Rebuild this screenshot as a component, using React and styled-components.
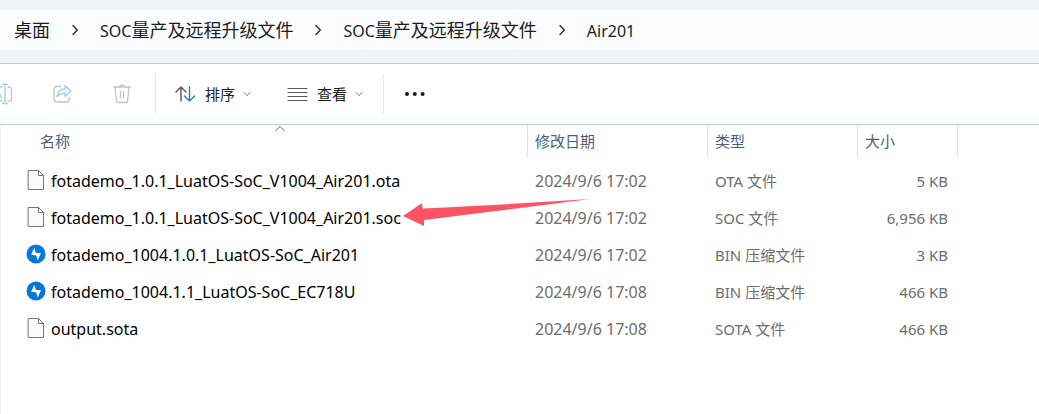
import React from "react";
import styled, { createGlobalStyle } from "styled-components";

const GlobalStyle = createGlobalStyle`
  * { box-sizing: border-box; }
  body {
    margin: 0;
    background: #fff;
    font-family: "Noto Sans", "Noto Sans CJK SC", sans-serif;
    font-size: 15px;
    line-height: 20px;
    color: #1b1b1b;
    overflow-x: hidden;
  }
  button { font: inherit; color: inherit; background: none; border: 0; padding: 0; margin: 0; }
`;

const Window = styled.div`
  display: flex;
  flex-direction: column;
  min-height: 100vh;
`;

const AddressBand = styled.header`
  padding: 10px 0 13px;
  background: #eff4f7;
  border-bottom: 1px solid #b8cbd1;
`;

const Breadcrumb = styled.nav`
  display: flex;
  align-items: center;
  gap: 20px;
  height: 40px;
  padding-left: 14px;
  background: #fbfcfe;
  white-space: nowrap;
`;

const Crumb = styled.a`
  color: #1b1b1b;
  text-decoration: none;
  font-size: 18px;
  line-height: 24px;
`;

const Latin = styled.span`
  font-size: 16px;
`;

const Toolbar = styled.div`
  display: flex;
  align-items: center;
  height: 61px;
  border-bottom: 1px solid #b8cbd1;
`;

const Icon = styled.svg`
  display: block;
  flex: none;
  fill: none;
  stroke: currentColor;
  stroke-linecap: round;
  stroke-linejoin: round;
`;

const IconGroup = styled.div`
  display: flex;
  align-items: center;
  gap: 40px;
  color: #c4c4c4;
`;

const ToolButton = styled.button`
  display: flex;
  align-items: center;
  gap: 8px;
  white-space: nowrap;
`;

const Separator = styled.span`
  width: 1px;
  height: 40px;
  margin: 0 ${(p) => p.$after}px 0 ${(p) => p.$before}px;
  background: #e8e8e8;
`;

const MenuGroup = styled.div`
  display: flex;
  gap: 36px;
`;

const FilePane = styled.main`
  flex: 1;
  border-left: 1px solid #f0f0f0;
`;

const FileTable = styled.table`
  width: 100%;
  table-layout: fixed;
  border-collapse: separate;
  border-spacing: 0;
`;

const HeadCell = styled.th`
  width: ${(p) => p.$width}px;
  height: 32px;
  padding: 0 0 0 ${(p) => p.$indent || 0}px;
  border-right: 1px solid #e2e2e2;
  text-align: left;
  font-weight: 400;
  color: #4c607a;
`;

const SortButton = styled.button`
  position: relative;
  display: block;
  width: 100%;
  height: 32px;
  padding-left: 7px;
  text-align: left;
`;

const SortMark = styled(Icon)`
  position: absolute;
  top: 0;
  left: calc(50% - 6px);
  color: #6a6a6a;
`;

const Rows = styled.tbody`
  &::before {
    content: "";
    display: block;
    height: 5px;
  }
`;

const Cell = styled.td`
  height: 37px;
  padding: 0 10px 0 7px;
  text-align: ${(p) => (p.$right ? "right" : "left")};
  font-size: ${(p) => (p.$large ? 16 : 15)}px;
  color: #6d6d6d;
  white-space: nowrap;
`;

const NameCell = styled(Cell)`
  position: relative;
  padding: 0 0 0 25px;
  color: #000;
`;

const FileName = styled.div`
  display: flex;
  align-items: center;
  gap: 5px;
`;

const Pointer = styled.svg`
  position: absolute;
  left: 401px;
  top: -1px;
  z-index: 1;
  fill: #ff5364;
`;

const files = [
  { name: "fotademo_1.0.1_LuatOS-SoC_V1004_Air201.ota", date: "2024/9/6 17:02", type: "OTA 文件", size: "5 KB" },
  { name: "fotademo_1.0.1_LuatOS-SoC_V1004_Air201.soc", date: "2024/9/6 17:02", type: "SOC 文件", size: "6,956 KB", marked: true },
  { name: "fotademo_1004.1.0.1_LuatOS-SoC_Air201", date: "2024/9/6 17:02", type: "BIN 压缩文件", size: "3 KB", archive: true },
  { name: "fotademo_1004.1.1_LuatOS-SoC_EC718U", date: "2024/9/6 17:08", type: "BIN 压缩文件", size: "466 KB", archive: true },
  { name: "output.sota", date: "2024/9/6 17:08", type: "SOTA 文件", size: "466 KB" },
];

const CrumbArrow = () => (
  <Icon width="10" height="12" viewBox="0 0 10 12" strokeWidth="1.5" color="#333" aria-hidden="true">
    <path d="M3 1.5 7.3 6 3 10.5" />
  </Icon>
);

const MenuArrow = () => (
  <Icon width="8" height="6" viewBox="0 0 8 6" color="#777" aria-hidden="true">
    <path d="M1 1.5 4 4.5 7 1.5" />
  </Icon>
);

const RenameIcon = () => (
  <Icon width="12" height="22" viewBox="0 0 12 22" strokeWidth="1.3">
    <path d="M0 4H2M0 18H2M8 4h1a2.5 2.5 0 0 1 2.5 2.5v9A2.5 2.5 0 0 1 9 18H8" />
    <path d="M5 1.5v19M2.5 1.5h5M2.5 20.5h5M-2 7 1.5 15" stroke="#9fcdf2" />
  </Icon>
);

const ShareIcon = () => (
  <Icon width="20" height="22" viewBox="0 0 20 22" strokeWidth="1.3">
    <path d="M8.500 3.500H5A3 3 0 0 0 2 6.500v9.500a3 3 0 0 0 3 3h9.500a3 3 0 0 0 3-3V14.500" />
    <path d="M13 2.500 19 8l-6 5.500v-3.200C9 10.200 7 11.300 5.200 13.800 5.500 9 8.500 6 13 5.700z" fill="#edf6fd" stroke="#9fcdf2" />
  </Icon>
);

const TrashIcon = () => (
  <Icon width="20" height="22" viewBox="0 0 20 22" strokeWidth="1.3">
    <path d="M1.500 4H18.500M7.500 4a2.500 2 0 0 1 5 0M3 4.500 4.400 17.800a2 2 0 0 0 2 1.700h7.200a2 2 0 0 0 2-1.700L17 4.500M8.500 8.500v6.500M11.500 8.500v6.500" />
  </Icon>
);

const SortIcon = () => (
  <Icon width="22" height="18" viewBox="0 0 22 18" strokeWidth="1.4">
    <path d="M6 16V2M1 7l5-5 5 5" stroke="#555" />
    <path d="M14.500 2v14M9.500 11l5 5 5-5" stroke="#1683d8" />
  </Icon>
);

const ViewIcon = () => (
  <Icon width="22" height="16" viewBox="0 0 22 16">
    <path d="M1 2.500h19M1 6.500h19M1 10.500h19M1 14.500h19" stroke="#5c5c5c" />
  </Icon>
);

const PageIcon = () => (
  <Icon width="20" height="22" viewBox="0 0 20 22" aria-hidden="true">
    <path d="M2.500 .5h10l5 5v14h-15z" fill="#fafafa" stroke="#777" strokeLinejoin="miter" />
    <path d="M12.500 .5v5h5" stroke="#777" strokeLinejoin="miter" />
  </Icon>
);

const ArchiveIcon = () => (
  <Icon width="20" height="22" viewBox="0 0 20 22" aria-hidden="true">
    <circle cx="10" cy="10" r="9.500" fill="#0878d8" stroke="none" />
    <path d="M8.300 3.800 9.800 8.800 15 9.200 11.600 16.400 10.300 11.400 5.200 10.700z" fill="#fff" stroke="none" />
  </Icon>
);

const path = ["桌面", "SOC量产及远程升级文件", "SOC量产及远程升级文件", "Air201"];

const CrumbText = ({ text }) => {
  const [, latin, rest] = text.match(/^([A-Za-z0-9]*)(.*)$/);
  return <>{latin && <Latin>{latin}</Latin>}{rest}</>;
};

export default function App() {
  return (
    <Window>
      <GlobalStyle />
      <AddressBand>
        <Breadcrumb aria-label="路径">
          {path.map((text, i) => (
            <React.Fragment key={i}>
              {i > 0 && <CrumbArrow />}
              <Crumb href="#"><CrumbText text={text} /></Crumb>
            </React.Fragment>
          ))}
        </Breadcrumb>
      </AddressBand>
      <Toolbar role="toolbar">
        <IconGroup>
          <ToolButton aria-label="重命名"><RenameIcon /></ToolButton>
          <ToolButton aria-label="共享"><ShareIcon /></ToolButton>
          <ToolButton aria-label="删除"><TrashIcon /></ToolButton>
        </IconGroup>
        <Separator $before={23} $after={19} />
        <MenuGroup>
          <ToolButton><SortIcon />排序<MenuArrow /></ToolButton>
          <ToolButton><ViewIcon />查看<MenuArrow /></ToolButton>
        </MenuGroup>
        <Separator $before={20} $after={20} />
        <ToolButton aria-label="更多">
          <Icon width="22" height="6" viewBox="0 0 22 6">
            <g fill="#1b1b1b" stroke="none">
              <circle cx="3" cy="3" r="2" />
              <circle cx="10.800" cy="3" r="2" />
              <circle cx="18.600" cy="3" r="2" />
            </g>
          </Icon>
        </ToolButton>
      </Toolbar>
      <FilePane>
        <FileTable>
          <thead>
            <tr>
              <HeadCell $width={527} $indent={32}>
                <SortButton>
                  名称
                  <SortMark width="12" height="8" viewBox="0 0 12 8" aria-hidden="true">
                    <path d="M1.500 6 6 1.500 10.500 6" />
                  </SortMark>
                </SortButton>
              </HeadCell>
              <HeadCell $width={180}><SortButton>修改日期</SortButton></HeadCell>
              <HeadCell $width={150}><SortButton>类型</SortButton></HeadCell>
              <HeadCell $width={100}><SortButton>大小</SortButton></HeadCell>
              <td />
            </tr>
          </thead>
          <Rows>
            {files.map((f) => (
              <tr key={f.name}>
                <NameCell $large>
                  <FileName>
                    {f.archive ? <ArchiveIcon /> : <PageIcon />}
                    {f.name}
                  </FileName>
                  {f.marked && (
                    <Pointer width="190" height="30" viewBox="0 0 190 30" aria-hidden="true">
                      <path d="M1 18 20 5 20.500 10.500 Q115 6 188 1 Q105 12 22 22 L22 28z" />
                    </Pointer>
                  )}
                </NameCell>
                <Cell $large>{f.date}</Cell>
                <Cell>{f.type}</Cell>
                <Cell $right>{f.size}</Cell>
                <td />
              </tr>
            ))}
          </Rows>
        </FileTable>
      </FilePane>
    </Window>
  );
}
